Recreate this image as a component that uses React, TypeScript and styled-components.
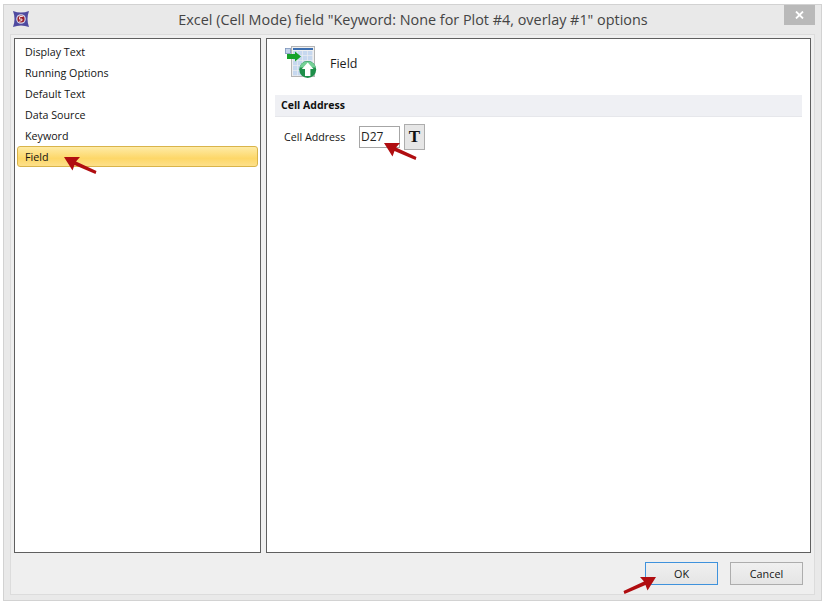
import styled, { createGlobalStyle } from "styled-components";

const GlobalStyle = createGlobalStyle`
  html, body {
    margin: 0;
    padding: 0;
    background: #fff;
    font-family: "Open Sans", "Noto Sans", sans-serif;
  }
`;

const Page = styled.div`
  position: relative;
  width: 827px;
  height: 605px;
  padding: 4px 0 0 3px;
  box-sizing: border-box;
  overflow: hidden;
`;
const Window = styled.div`
  width: 819px;
  height: 597px;
  box-sizing: border-box;
  border: 1px solid #d2d2d2;
  background: #e9e9e9;
  display: flex;
  flex-direction: column;
  padding: 0 6px 5px;
`;
const TitleBar = styled.div`
  height: 29px;
  flex: none;
  display: flex;
  align-items: flex-start;
`;
const AppIcon = styled.svg`
  width: 16px;
  height: 16px;
  margin: 6px 0 0 3px;
  flex: none;
`;
const Title = styled.div`
  flex: 1;
  text-align: center;
  font-size: 14.4px;
  line-height: 29px;
  color: #444;
  padding-left: 13px;
  white-space: nowrap;
`;
const CloseButton = styled.div`
  width: 31px;
  height: 20px;
  background: #b9b9b9;
  display: flex;
  align-items: center;
  justify-content: center;
  flex: none;
`;
const Frame = styled.div`
  flex: 1;
  border: 1px solid #dcdcdc;
  background: #efefef;
  padding: 3px 3px 0;
  display: flex;
  flex-direction: column;
  min-height: 0;
`;
const Panes = styled.div`
  display: flex;
  gap: 5px;
  height: 515px;
  flex: none;
`;
const NavList = styled.div`
  width: 247px;
  box-sizing: border-box;
  border: 1px solid #5f5f5f;
  background: #fff;
  padding: 2px 2px;
  display: flex;
  flex-direction: column;
`;
const NavItem = styled.div<{ $selected?: boolean }>`
  height: 21px;
  box-sizing: border-box;
  padding-left: 7px;
  font-size: 10.7px;
  line-height: 21px;
  color: #141414;
  border: 1px solid ${(p) => (p.$selected ? "#d9b44a" : "transparent")};
  border-radius: 3px;
  background: ${(p) =>
    p.$selected ? "linear-gradient(#feeba6, #fdd768 60%, #fde08a)" : "none"};
`;
const Content = styled.div`
  width: 545px;
  box-sizing: border-box;
  border: 1px solid #5f5f5f;
  background: #fff;
  padding: 7px 8px 0;
`;
const PageHeader = styled.div`
  display: flex;
  align-items: center;
  gap: 11px;
  height: 34px;
  padding-left: 10px;
  font-size: 12.5px;
  color: #1c1c1c;
`;
const SectionHeader = styled.div`
  margin-top: 15px;
  height: 22px;
  box-sizing: border-box;
  background: #eff0f4;
  border-bottom: 1px solid #e6e7eb;
  padding-left: 6px;
  font-size: 10.5px;
  font-weight: 700;
  line-height: 21px;
  color: #111;
`;
const FieldRow = styled.div`
  margin-top: 7px;
  display: flex;
  align-items: center;
  padding-left: 9px;
`;
const FieldLabel = styled.span`
  width: 75px;
  font-size: 10.7px;
  color: #141414;
`;
const AddressInput = styled.div`
  width: 41px;
  height: 22px;
  box-sizing: border-box;
  border: 1px solid #a6a6a6;
  font-size: 12px;
  line-height: 19px;
  padding-left: 1px;
  color: #222;
  background: #fff;
`;
const TextStyleButton = styled.div`
  margin-left: 4px;
  width: 21px;
  height: 26px;
  box-sizing: border-box;
  border: 1px solid #adadad;
  background: #e6e6e6;
  font-family: "Liberation Serif", serif;
  font-weight: 700;
  font-size: 17px;
  line-height: 23px;
  text-align: center;
  color: #111;
`;
const Footer = styled.div`
  flex: 1;
  display: flex;
  justify-content: flex-end;
  gap: 12px;
  padding: 9px 8px 0 0;
`;
const DialogButton = styled.div<{ $default?: boolean }>`
  width: 73px;
  height: 23px;
  box-sizing: border-box;
  border: 1px solid ${(p) => (p.$default ? "#3f92dc" : "#adadad")};
  background: linear-gradient(#f0f0f0, #e5e5e5);
  font-size: 10.8px;
  line-height: 22px;
  text-align: center;
  color: #141414;
`;
const ArrowMark = styled.svg<{ $left: number; $top: number }>`
  position: absolute;
  left: ${(p) => p.$left}px;
  top: ${(p) => p.$top}px;
  width: 34px;
  height: 20px;
  overflow: visible;
`;

const items = ["Display Text", "Running Options", "Default Text", "Data Source", "Keyword", "Field"];
const gridRows = [0, 1, 2, 3, 4];
const gridCols = [0, 1, 2, 3];

// tip at the left end, tail going down right
function Arrow({ left, top, flip }: { left: number; top: number; flip?: boolean }) {
  return (
    <ArrowMark $left={left} $top={top} viewBox="0 0 34 20">
      <g transform={flip ? "translate(34 0) scale(-1 1)" : undefined}>
        <path d="M0 0 L16 0 L12 4.5 L32.5 14 L31.5 17 L10.5 8 L8.5 13.5 Z" fill="#b00d10" />
      </g>
    </ArrowMark>
  );
}

function FieldIcon() {
  return (
    <svg width="34" height="34" viewBox="0 0 34 34">
      <rect x="6.5" y="0.5" width="23" height="30" fill="#f0f0f0" stroke="#b5b5b5" />
      <rect x="8" y="2" width="20" height="2" fill="#3d6fb0" />
      {gridRows.map((r) =>
        gridCols.map((c) => (
          <rect key={`${r}-${c}`} x={8 + c * 5} y={5 + r * 5} width="4.4" height="4.4" fill="#c6d8ef" />
        )),
      )}
      <rect x="0.5" y="2.5" width="5" height="5" fill="#c3d3ea" stroke="#7d95bb" strokeWidth="0.8" />
      <path d="M2 8 H10 V5.5 L16 10.5 L10 15.5 V13 H2 Z" fill="#17a32a" />
      <circle cx="22.7" cy="23.5" r="8.5" fill="#1e8f4a" />
      <path d="M14.6 21.5 A8.5 8.5 0 0 1 30.8 21.5 Z" fill="#74d096" />
      <path d="M22.7 16.5 L28.5 23 H25.4 V30 H20 V23 H16.9 Z" fill="#fff" />
    </svg>
  );
}

export default function App() {
  return (
    <>
      <GlobalStyle />
      <Page>
        <Window>
          <TitleBar>
            <AppIcon viewBox="0 0 16 16">
              <path d="M0 0 Q8 3 16 0 Q13 8 16 16 Q8 13 0 16 Q3 8 0 0 Z" fill="#4f4aa0" />
              <circle cx="8" cy="8" r="4.8" fill="#d5d6ea" />
              <circle cx="8" cy="8" r="3.6" fill="#9c1f2a" />
              <path d="M9.8 5.5 H6.8 L6.4 8.1 H9 V9.5 L6.2 10.4" fill="none" stroke="#f4e3e3" strokeWidth="1" />
            </AppIcon>
            <Title>Excel (Cell Mode) field "Keyword: None for Plot #4, overlay #1" options</Title>
            <CloseButton>
              <svg width="9" height="8" viewBox="0 0 9 8">
                <path d="M1 0.5 L8 7.5 M8 0.5 L1 7.5" stroke="#fff" strokeWidth="1.8" />
              </svg>
            </CloseButton>
          </TitleBar>
          <Frame>
            <Panes>
              <NavList>
                {items.map((x) => (
                  <NavItem key={x} $selected={x === "Field"}>
                    {x}
                  </NavItem>
                ))}
              </NavList>
              <Content>
                <PageHeader>
                  <FieldIcon />
                  <span>Field</span>
                </PageHeader>
                <SectionHeader>Cell Address</SectionHeader>
                <FieldRow>
                  <FieldLabel>Cell Address</FieldLabel>
                  <AddressInput>D27</AddressInput>
                  <TextStyleButton>T</TextStyleButton>
                </FieldRow>
              </Content>
            </Panes>
            <Footer>
              <DialogButton $default>OK</DialogButton>
              <DialogButton>Cancel</DialogButton>
            </Footer>
          </Frame>
        </Window>
        <Arrow left={64} top={157} />
        <Arrow left={384} top={143} />
        <Arrow left={622} top={577} flip />
      </Page>
    </>
  );
}
